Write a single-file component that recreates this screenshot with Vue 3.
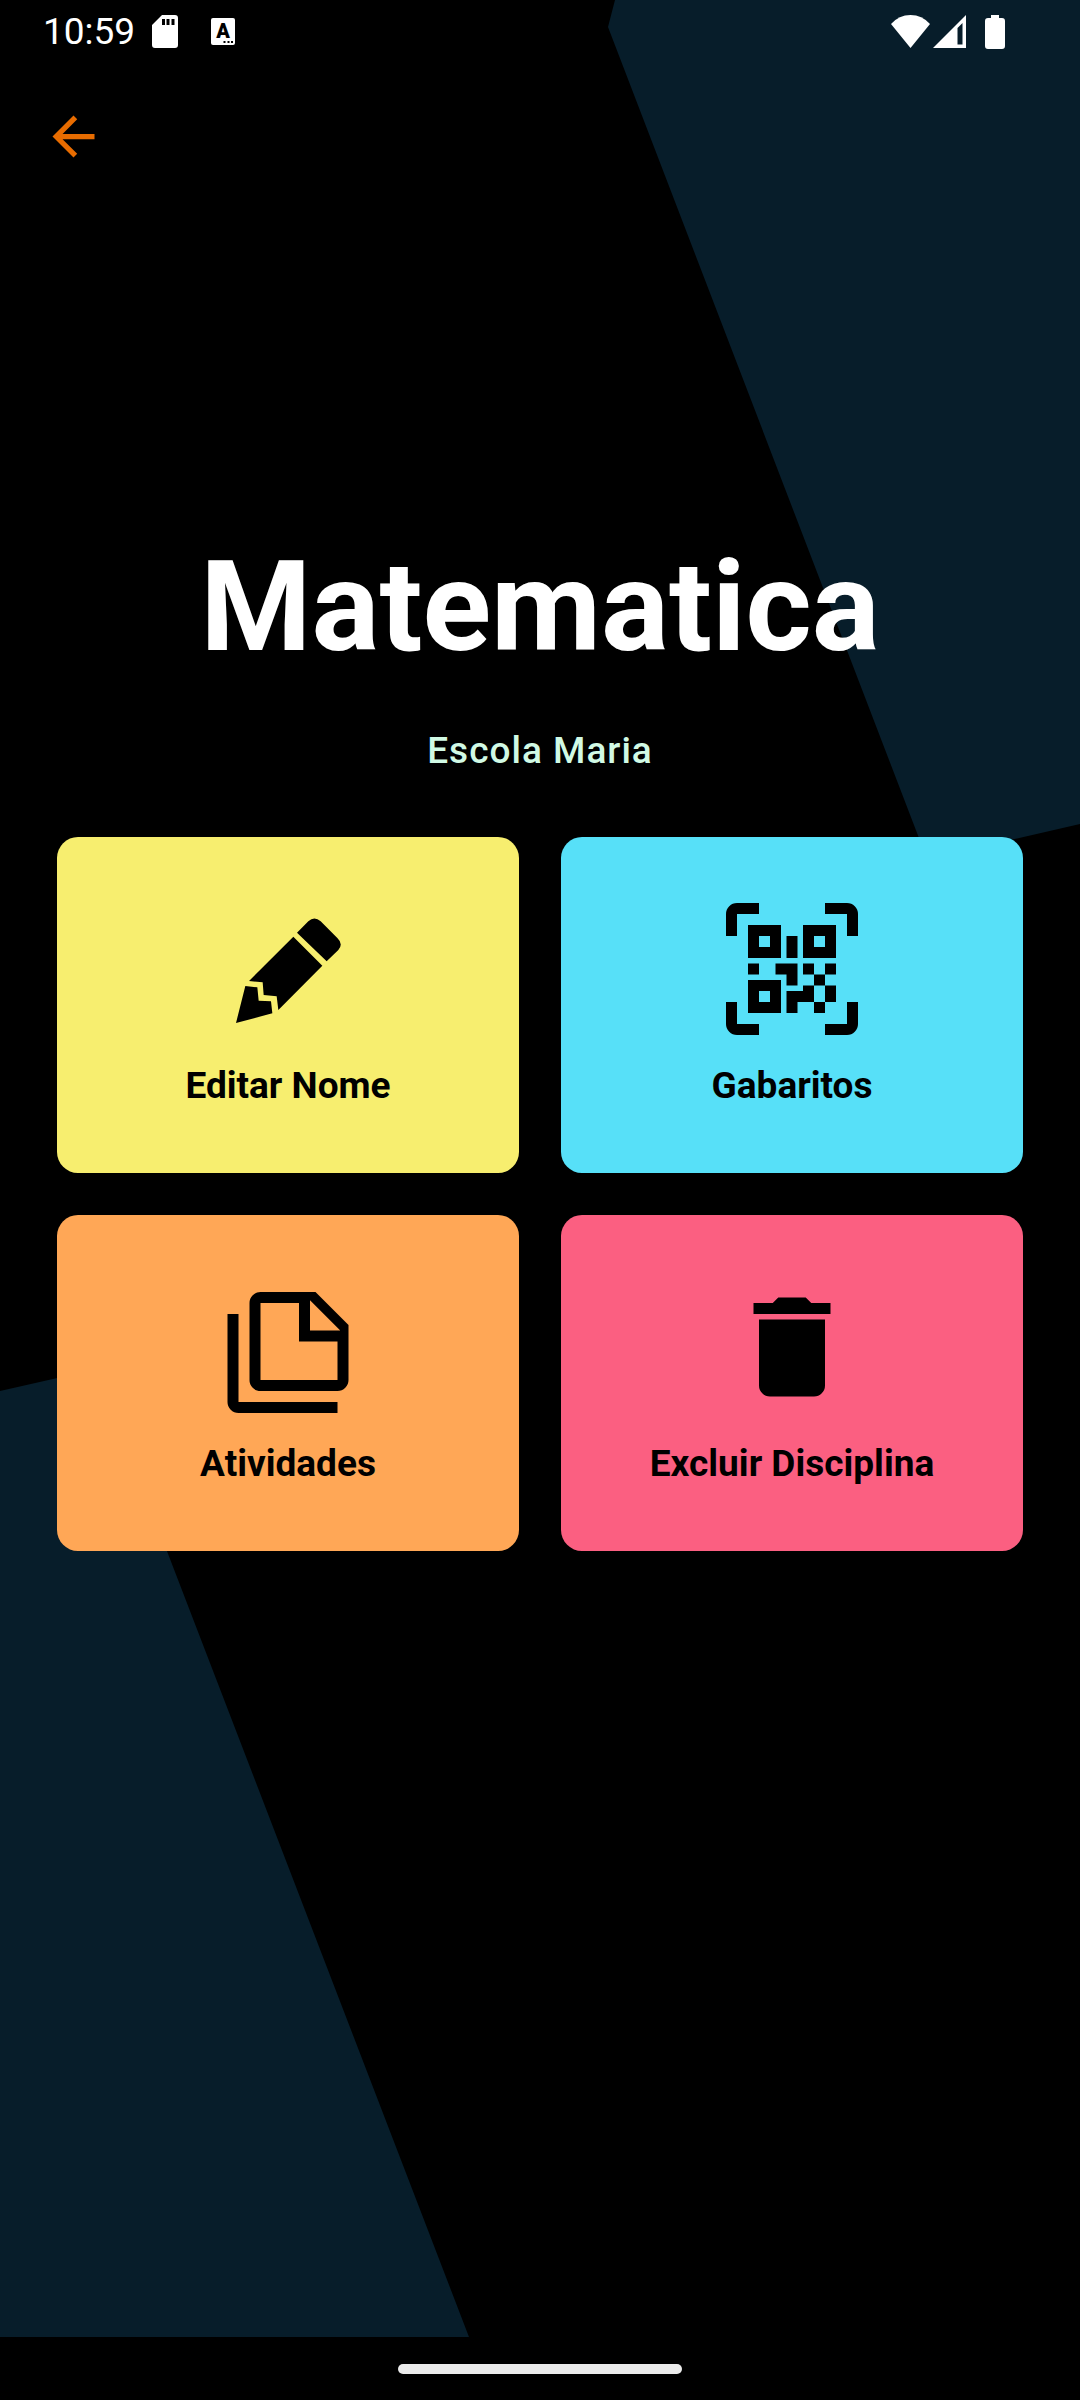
<script setup>
const actions = [
  {
    label: 'Editar Nome',
    tone: 'yellow',
    viewBox: '66 39 396 396',
    path: 'M291 128L325 94Q343 77 362 94L412 144Q431 162 415 180L380 214ZM280 140L367 227L235 360L230 319L191 315L188 277L147 273ZM136 288L172 292L176 332L213 334L217 370L108 399Z',
  },
  {
    label: 'Gabaritos',
    tone: 'cyan',
    viewBox: '0 0 24 24',
    path: 'M4,4H10V10H4V4M20,4V10H14V4H20M14,15H16V13H14V11H16V13H18V11H20V13H18V15H20V18H18V20H16V18H13V20H11V16H14V15M16,15V18H18V15H16M4,20V14H10V20H4M6,6V8H8V6H6M16,6V8H18V6H16M6,16V18H8V16H6M4,11H6V13H4V11M9,11H13V15H11V13H9V11M11,6H13V10H11V6M2,2V6H0V2A2,2 0 0,1 2,0H6V2H2M22,0A2,2 0 0,1 24,2V6H22V2H18V0H22M2,18V22H6V24H2A2,2 0 0,1 0,22V18H2M22,22V18H24V22A2,2 0 0,1 22,24H18V22H22Z',
  },
  {
    label: 'Atividades',
    tone: 'orange',
    viewBox: '0 0 24 24',
    path: 'M3,6V22H21V24H3A2,2 0 0,1 1,22V6H3M16,9H21.5L16,3.5V9M7,2H17L23,8V18A2,2 0 0,1 21,20H7C5.89,20 5,19.1 5,18V4A2,2 0 0,1 7,2M7,4V18H21V11H14V4H7Z',
  },
  {
    label: 'Excluir Disciplina',
    tone: 'pink',
    viewBox: '0 0 24 24',
    path: 'M19,4H15.5L14.5,3H9.5L8.5,4H5V6H19M6,19A2,2 0 0,0 8,21H16A2,2 0 0,0 18,19V7H6V19Z',
  },
]
</script>

<template>
  <div class="screen">
    <svg class="backdrop" viewBox="0 0 1080 2400" preserveAspectRatio="none" aria-hidden="true">
      <path d="M615 0L608 27L927 859L1080 824V0ZM0 1391L97 1369L469 2337H0Z" />
    </svg>

    <div class="status-bar">
      <div class="status-left">
        <span class="clock">10:59</span>
        <svg class="sd" viewBox="0 0 26 33" aria-hidden="true">
          <path fill-rule="evenodd" d="M10 0H23Q26 0 26 3V30Q26 33 23 33H3Q0 33 0 30V10ZM10 4V10H13V4ZM14.500 4V10H17.500V4ZM19.500 4V10H22.500V4Z" />
        </svg>
        <svg class="keyboard" viewBox="0 0 24 27" aria-hidden="true">
          <rect width="24" height="27" rx="2" />
          <text x="12" y="20" text-anchor="middle">A</text>
          <path class="dots" d="M12.500 23h2v2h-2zM16.500 23h2v2h-2zM20 23h2v2h-2z" />
        </svg>
      </div>
      <div class="status-right">
        <svg class="wifi" viewBox="0 0 39 33" aria-hidden="true">
          <path d="M0 9Q8 0 19.500 0T39 9L19.500 33Z" />
        </svg>
        <svg class="signal" viewBox="0 0 33 33" aria-hidden="true">
          <path fill-rule="evenodd" d="M33 0V33H0ZM24.500 13V29.500H29.500V8Z" />
        </svg>
        <svg class="battery" viewBox="0 0 20 34" aria-hidden="true">
          <path d="M6 0H14V3H17Q20 3 20 6V31Q20 34 17 34H3Q0 34 0 31V6Q0 3 3 3H6Z" />
        </svg>
      </div>
    </div>

    <header class="toolbar">
      <button class="back" type="button" aria-label="Voltar">
        <svg viewBox="0 0 24 24" aria-hidden="true">
          <path d="M20 11H7.830l5.590-5.590L12 4l-8 8 8 8 1.410-1.410L7.830 13H20v-2z" />
        </svg>
      </button>
    </header>

    <main class="content">
      <h1>Matematica</h1>
      <p class="school">Escola Maria</p>
      <div class="grid">
        <button
          v-for="action in actions"
          :key="action.label"
          type="button"
          class="card"
          :class="action.tone"
        >
          <svg :viewBox="action.viewBox" aria-hidden="true"><path :d="action.path" /></svg>
          <span>{{ action.label }}</span>
        </button>
      </div>
    </main>

    <div class="nav-bar"><div class="pill"></div></div>
  </div>
</template>

<style>
body {
  margin: 0;
  background: #000;
}
</style>

<style scoped>
.screen {
  position: relative;
  isolation: isolate;
  box-sizing: border-box;
  min-height: 100vh;
  display: flex;
  flex-direction: column;
  background: #000;
  color: #fff;
  font-family: Roboto, "Liberation Sans", sans-serif;
}
.backdrop {
  position: absolute;
  inset: 0;
  z-index: -1;
  width: 100%;
  height: 100%;
  fill: #071d2a;
}
.status-bar {
  display: flex;
  justify-content: space-between;
  height: 63px;
  padding: 0 75px 0 43px;
  box-sizing: border-box;
  fill: #fff;
}
.status-left,
.status-right {
  display: flex;
  align-items: center;
}
.clock {
  font-size: 37px;
  line-height: 62px;
}
.sd {
  width: 26px;
  height: 33px;
  margin-left: 17px;
}
.keyboard {
  width: 24px;
  height: 27px;
  margin-left: 33px;
}
.keyboard text {
  fill: #000;
  font-size: 20px;
  font-weight: 900;
}
.keyboard .dots {
  fill: #000;
}
.wifi {
  width: 39px;
  height: 33px;
}
.signal {
  width: 33px;
  height: 33px;
  margin-left: 3px;
}
.battery {
  width: 20px;
  height: 34px;
  margin-left: 19px;
}
.toolbar {
  padding: 42px 42px 0;
}
.back {
  display: block;
  width: 63px;
  height: 63px;
  padding: 0;
  border: 0;
  background: none;
  fill: #e86c00;
}
.back svg {
  display: block;
}
.content {
  flex: 1;
  padding: 365px 57px 63px;
  text-align: center;
}
h1 {
  margin: 0;
  font-size: 127px;
  line-height: 148px;
  font-weight: 700;
}
.school {
  margin: 48px 0 64px;
  color: #d1fae5;
  font-size: 37px;
  line-height: 44px;
  font-weight: 500;
  letter-spacing: 1px;
}
.grid {
  display: grid;
  grid-template-columns: 1fr 1fr;
  gap: 42px;
}
.card {
  display: flex;
  flex-direction: column;
  align-items: center;
  padding: 66px 16px 65px;
  border: 0;
  border-radius: 21px;
  color: #000;
  font: 700 37px/44px Roboto, "Liberation Sans", sans-serif;
}
.card svg {
  width: 132px;
  height: 132px;
  margin-bottom: 29px;
}
.yellow {
  background: #f7ee6f;
}
.cyan {
  background: #57e0f8;
}
.orange {
  background: #ffa756;
}
.pink {
  background: #fb5f81;
}
.nav-bar {
  display: flex;
  align-items: center;
  justify-content: center;
  height: 63px;
  background: #000;
}
.pill {
  width: 284px;
  height: 10px;
  border-radius: 5px;
  background: #ebebeb;
}
</style>
